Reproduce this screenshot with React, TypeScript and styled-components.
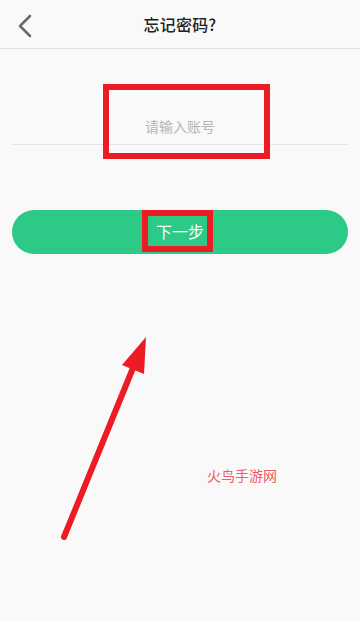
import React from "react";
import styled, { createGlobalStyle } from "styled-components";

const Global = createGlobalStyle`
  html, body { margin: 0; padding: 0; background: #f9f9f9; }
  body { font-family: "Noto Sans CJK SC", "Noto Sans", sans-serif; }
  * { box-sizing: border-box; }
`;

const Page = styled.div`
  position: relative;
  width: 360px;
  height: 621px;
  background: #f9f9f9;
  overflow: hidden;
`;

const Header = styled.header`
  position: relative;
  height: 49px;
  display: flex;
  align-items: center;
  justify-content: center;
  border-bottom: 1px solid #e2e2e2;
`;

const Back = styled.button`
  position: absolute;
  left: 12px;
  top: 11px;
  width: 26px;
  height: 30px;
  padding: 0;
  border: 0;
  background: none;
  display: flex;
  align-items: center;
  justify-content: center;
`;

const Title = styled.h1`
  margin: 0;
  font-size: 16px;
  font-weight: 500;
  color: #222;
  letter-spacing: 0.2px;
`;

const Body = styled.main`
  padding: 0 12px;
  display: flex;
  flex-direction: column;
`;

const Field = styled.div`
  height: 96px;
  display: flex;
  align-items: flex-end;
  border-bottom: 1px solid #e4e4e4;
`;

const Input = styled.input`
  width: 100%;
  height: 36px;
  border: 0;
  outline: none;
  background: transparent;
  text-align: center;
  font-family: inherit;
  font-size: 14px;
  color: #333;
  padding: 0;
  &::placeholder { color: #b5b5b5; }
`;

const Primary = styled.button`
  margin-top: 65px;
  height: 44px;
  border: 0;
  border-radius: 22px;
  background: #2dc986;
  color: #fff;
  font-family: inherit;
  font-size: 16px;
  display: flex;
  align-items: flex-start;
  justify-content: center;
  padding: 0;
`;

const Highlight = styled.span`
  height: 42px;
  width: 71px;
  margin-right: 5px;
  padding-left: 5px;
  border: 6px solid #ed1c24;
  display: flex;
  align-items: center;
  justify-content: center;
  line-height: 1;
`;

const Mark = styled.div`
  position: absolute;
  left: 103px;
  top: 84px;
  width: 167px;
  height: 75px;
  border: 6px solid #ed1c24;
  pointer-events: none;
`;

const Overlay = styled.svg`
  position: absolute;
  left: 0;
  top: 0;
  pointer-events: none;
`;

const Watermark = styled.div`
  position: absolute;
  left: 207px;
  top: 465px;
  font-size: 14px;
  color: #ef5a66;
`;

export default function App() {
  return (
    <>
      <Global />
      <Page>
        <Header>
          <Back aria-label="back">
            <svg width="16" height="24" viewBox="0 0 16 24">
              <polyline points="13,2 3,12 13,22" fill="none" stroke="#6b6b6b" strokeWidth="2.6" strokeLinecap="round" strokeLinejoin="round" />
            </svg>
          </Back>
          <Title>忘记密码?</Title>
        </Header>
        <Body>
          <Field>
            <Input placeholder="请输入账号" />
          </Field>
          <Primary>
            <Highlight>下一步</Highlight>
          </Primary>
        </Body>
        <Mark />
        <Overlay width="360" height="621" viewBox="0 0 360 621">
          <line x1="64" y1="537" x2="133" y2="368" stroke="#ed1c24" strokeWidth="6" strokeLinecap="round" />
          <polygon points="146,337 122,365 144,374" fill="#ed1c24" />
        </Overlay>
        <Watermark>火鸟手游网</Watermark>
      </Page>
    </>
  );
}
